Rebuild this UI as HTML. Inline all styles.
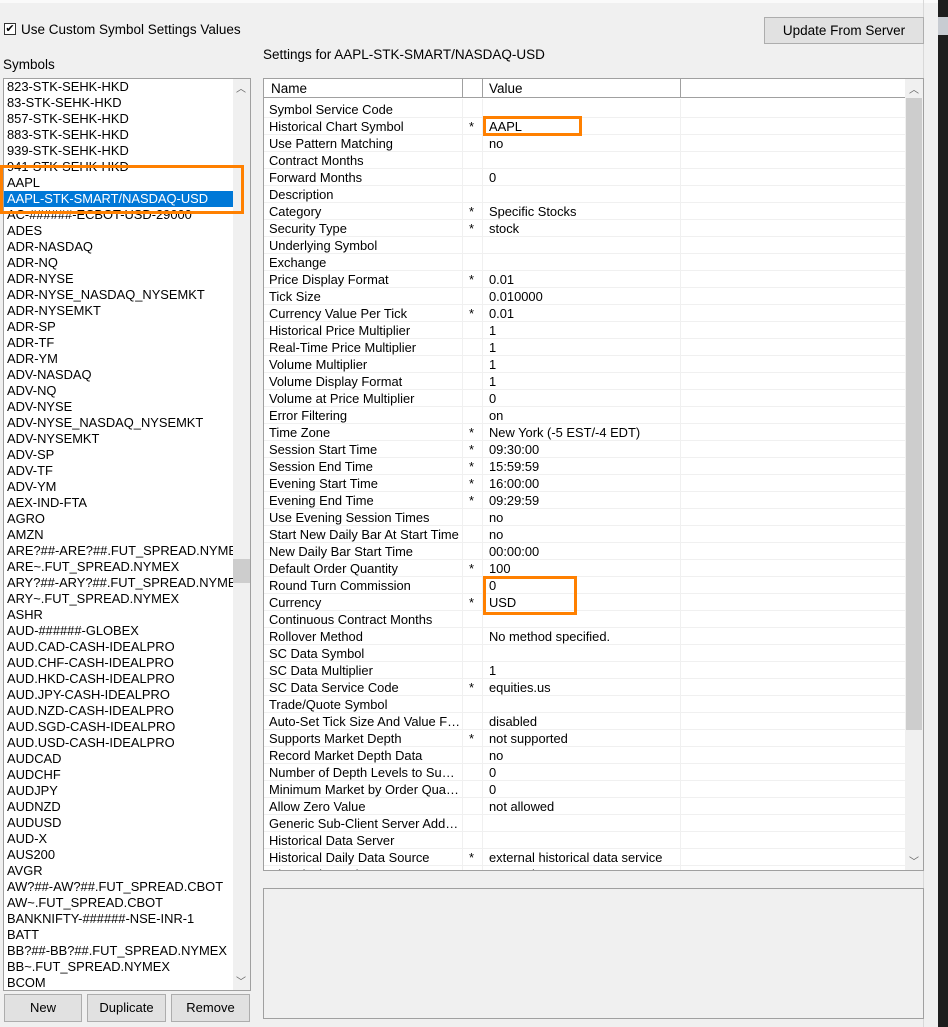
<!DOCTYPE html>
<html><head><meta charset="utf-8"><style>
*{margin:0;padding:0;box-sizing:border-box}
body{width:948px;height:1027px;background:#f0f0f0;font-family:"Liberation Sans",sans-serif;font-size:12.9px;color:#000;position:relative;overflow:hidden}
.a{position:absolute;white-space:nowrap}
.list{position:absolute;left:3px;top:78px;width:248px;height:913px;background:#fff;border:1px solid #a0a0a0;overflow:hidden}
.list div{height:16px;line-height:16px;padding-left:3px;white-space:nowrap}
.sel{background:#0078d7;color:#fff;width:229px}
.btn{position:absolute;top:994px;height:28px;background:#e1e1e1;border:1px solid #adadad;text-align:center;line-height:26px;font-size:13px}
.grid{position:absolute;left:263px;top:78px;width:661px;height:793px;background:#fff;border:1px solid #a0a0a0;overflow:hidden}
.row{position:absolute;left:0;height:17px;width:641px;border-bottom:1px solid #f0f0f0;line-height:17px}
.row span{position:absolute;top:0;white-space:nowrap;overflow:hidden}
.n{left:5px;width:192px;text-overflow:ellipsis}.s{left:205px}.v{left:225px}
.vl{position:absolute;top:0;width:1px;background:#f0f0f0;height:793px}
.or{position:absolute;border:3px solid #ff8000}
</style></head><body>
<div class="a" style="left:0;top:0;width:938px;height:3px;background:#fafafa"></div>
<div class="a" style="left:938px;top:0;width:10px;height:1027px;background:#1e1e1e"></div>
<div class="a" style="left:938px;top:17px;width:10px;height:18px;background:#c8ccd2"></div>
<div class="a" style="left:923px;top:0;width:1px;height:1027px;background:#d8d8d8"></div>
<div class="a" style="left:4px;top:23px;width:12px;height:12px;border:1px solid #333;background:#fff;font-size:11px;line-height:10px;text-align:center">✔</div>
<div class="a" style="left:21px;top:22px;font-size:13.5px">Use Custom Symbol Settings Values</div>
<div class="a" style="left:3px;top:57px;font-size:13.5px">Symbols</div>
<div class="a" style="left:263px;top:47px;font-size:13.5px">Settings for AAPL-STK-SMART/NASDAQ-USD</div>
<div class="btn" style="left:764px;top:17px;width:160px;height:27px;line-height:25px;font-size:13.5px">Update From Server</div>
<div class="list">
<div>823-STK-SEHK-HKD</div><div>83-STK-SEHK-HKD</div><div>857-STK-SEHK-HKD</div><div>883-STK-SEHK-HKD</div><div>939-STK-SEHK-HKD</div><div>941-STK-SEHK-HKD</div><div>AAPL</div><div class="sel">AAPL-STK-SMART/NASDAQ-USD</div><div>AC-######-ECBOT-USD-29000</div><div>ADES</div><div>ADR-NASDAQ</div><div>ADR-NQ</div><div>ADR-NYSE</div><div>ADR-NYSE_NASDAQ_NYSEMKT</div><div>ADR-NYSEMKT</div><div>ADR-SP</div><div>ADR-TF</div><div>ADR-YM</div><div>ADV-NASDAQ</div><div>ADV-NQ</div><div>ADV-NYSE</div><div>ADV-NYSE_NASDAQ_NYSEMKT</div><div>ADV-NYSEMKT</div><div>ADV-SP</div><div>ADV-TF</div><div>ADV-YM</div><div>AEX-IND-FTA</div><div>AGRO</div><div>AMZN</div><div>ARE?##-ARE?##.FUT_SPREAD.NYMEX</div><div>ARE~.FUT_SPREAD.NYMEX</div><div>ARY?##-ARY?##.FUT_SPREAD.NYMEX</div><div>ARY~.FUT_SPREAD.NYMEX</div><div>ASHR</div><div>AUD-######-GLOBEX</div><div>AUD.CAD-CASH-IDEALPRO</div><div>AUD.CHF-CASH-IDEALPRO</div><div>AUD.HKD-CASH-IDEALPRO</div><div>AUD.JPY-CASH-IDEALPRO</div><div>AUD.NZD-CASH-IDEALPRO</div><div>AUD.SGD-CASH-IDEALPRO</div><div>AUD.USD-CASH-IDEALPRO</div><div>AUDCAD</div><div>AUDCHF</div><div>AUDJPY</div><div>AUDNZD</div><div>AUDUSD</div><div>AUD-X</div><div>AUS200</div><div>AVGR</div><div>AW?##-AW?##.FUT_SPREAD.CBOT</div><div>AW~.FUT_SPREAD.CBOT</div><div>BANKNIFTY-######-NSE-INR-1</div><div>BATT</div><div>BB?##-BB?##.FUT_SPREAD.NYMEX</div><div>BB~.FUT_SPREAD.NYMEX</div><div>BCOM</div>
<span class="a" style="left:229px;top:0;width:17px;height:911px;background:#f0f0f0"></span>
<span class="a" style="left:229px;top:480px;width:17px;height:24px;background:#cdcdcd"></span>
<span class="a" style="left:232px;top:1px;font-size:10px;color:#606060">︿</span>
<span class="a" style="left:232px;top:894px;font-size:10px;color:#606060">﹀</span>
</div>
<div class="or" style="left:0;top:165px;width:244px;height:49px"></div>
<div class="btn" style="left:4px;width:78px">New</div>
<div class="btn" style="left:87px;width:79px">Duplicate</div>
<div class="btn" style="left:171px;width:79px">Remove</div>
<div class="grid">
<div class="a" style="left:0;top:0;width:641px;height:19px;border-bottom:1px solid #a0a0a0;background:#fff"></div>
<div class="a" style="left:7px;top:2px;font-size:13.5px">Name</div>
<div class="a" style="left:225px;top:2px;font-size:13.5px">Value</div>
<div class="a" style="left:198px;top:0;width:1px;height:19px;background:#a0a0a0"></div>
<div class="a" style="left:218px;top:0;width:1px;height:19px;background:#a0a0a0"></div>
<div class="a" style="left:416px;top:0;width:1px;height:19px;background:#a0a0a0"></div>
<div class="vl" style="left:198px;top:20px"></div><div class="vl" style="left:218px;top:20px"></div><div class="vl" style="left:416px;top:20px"></div>
<div id="rows"></div>
<span class="a" style="left:641px;top:0;width:18px;height:791px;background:#f0f0f0"></span>
<span class="a" style="left:642px;top:19px;width:16px;height:632px;background:#cdcdcd"></span>
<span class="a" style="left:645px;top:2px;font-size:10px;color:#606060">︿</span>
<span class="a" style="left:645px;top:774px;font-size:10px;color:#606060">﹀</span>
</div>
<div class="or" style="left:483px;top:116px;width:99px;height:20px"></div>
<div class="or" style="left:483px;top:576px;width:94px;height:39px"></div>
<div class="a" style="left:263px;top:888px;width:661px;height:131px;border:1px solid #a0a0a0;background:#f0f0f0"></div>
<script>
var d=[["Symbol Service Code","",""],["Historical Chart Symbol","*","AAPL"],["Use Pattern Matching","","no"],["Contract Months","",""],["Forward Months","","0"],["Description","",""],["Category","*","Specific Stocks"],["Security Type","*","stock"],["Underlying Symbol","",""],["Exchange","",""],["Price Display Format","*","0.01"],["Tick Size","","0.010000"],["Currency Value Per Tick","*","0.01"],["Historical Price Multiplier","","1"],["Real-Time Price Multiplier","","1"],["Volume Multiplier","","1"],["Volume Display Format","","1"],["Volume at Price Multiplier","","0"],["Error Filtering","","on"],["Time Zone","*","New York (-5 EST/-4 EDT)"],["Session Start Time","*","09:30:00"],["Session End Time","*","15:59:59"],["Evening Start Time","*","16:00:00"],["Evening End Time","*","09:29:59"],["Use Evening Session Times","","no"],["Start New Daily Bar At Start Time","","no"],["New Daily Bar Start Time","","00:00:00"],["Default Order Quantity","*","100"],["Round Turn Commission","","0"],["Currency","*","USD"],["Continuous Contract Months","",""],["Rollover Method","","No method specified."],["SC Data Symbol","",""],["SC Data Multiplier","","1"],["SC Data Service Code","*","equities.us"],["Trade/Quote Symbol","",""],["Auto-Set Tick Size And Value From","","disabled"],["Supports Market Depth","*","not supported"],["Record Market Depth Data","","no"],["Number of Depth Levels to Subscribe","","0"],["Minimum Market by Order Quantity","","0"],["Allow Zero Value","","not allowed"],["Generic Sub-Client Server Address","",""],["Historical Data Server","",""],["Historical Daily Data Source","*","external historical data service"],["Historical Intraday Data Source","","external"]];
var h="";d.forEach(function(r,i){h+='<div class="row" style="top:'+(22+17*i)+'px"><span class="n">'+r[0]+'</span><span class="s">'+r[1]+'</span><span class="v">'+r[2]+'</span></div>'});
document.getElementById("rows").innerHTML=h;
</script>
</body></html>
